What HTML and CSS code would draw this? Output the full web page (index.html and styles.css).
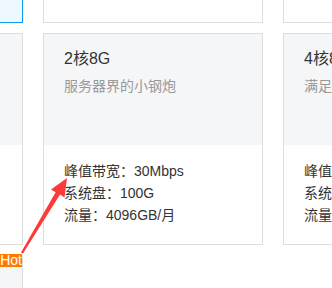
FILE: index.html
```html
<!DOCTYPE html>
<html lang="zh-CN">

<head>
    <meta charset="UTF-8">
    <meta name="viewport" content="width=device-width, initial-scale=1.0">
    <title>服务器套餐</title>
    <link rel="stylesheet" href="styles.css">
</head>

<body>
    <div class="plans">
        <!-- row 1 -->
        <div class="card active">
            <div class="card-head">
                <h3 class="title">1核1G</h3>
                <p class="desc">入门建站首选</p>
            </div>
            <ul class="specs">
                <li>峰值带宽：10Mbps</li>
                <li>系统盘：40G</li>
                <li>流量：1024GB/月</li>
            </ul>
        </div>
        <div class="card plain">
            <div class="card-head">
                <h3 class="title">2核4G</h3>
                <p class="desc">个人开发者之选</p>
            </div>
            <ul class="specs">
                <li>峰值带宽：20Mbps</li>
                <li>系统盘：80G</li>
                <li>流量：2048GB/月</li>
            </ul>
        </div>
        <div class="card plain">
            <div class="card-head">
                <h3 class="title">4核4G</h3>
                <p class="desc">中小企业推荐</p>
            </div>
            <ul class="specs">
                <li>峰值带宽：30Mbps</li>
                <li>系统盘：80G</li>
                <li>流量：3072GB/月</li>
            </ul>
        </div>

        <!-- row 2 -->
        <div class="card">
            <div class="card-head">
                <h3 class="title">2核2G</h3>
                <p class="desc">轻量应用好帮手</p>
            </div>
            <ul class="specs">
                <li>峰值带宽：20Mbps</li>
                <li>系统盘：60G</li>
                <li>流量：2048GB/月</li>
            </ul>
        </div>
        <div class="card">
            <div class="card-head">
                <h3 class="title">2核8G</h3>
                <p class="desc">服务器界的小钢炮</p>
            </div>
            <ul class="specs">
                <li>峰值带宽：30Mbps</li>
                <li>系统盘：100G</li>
                <li>流量：4096GB/月</li>
            </ul>
        </div>
        <div class="card">
            <div class="card-head">
                <h3 class="title">4核8G</h3>
                <p class="desc">满足企业级业务需求</p>
            </div>
            <ul class="specs">
                <li>峰值带宽：50Mbps</li>
                <li>系统盘：120G</li>
                <li>流量：6144GB/月</li>
            </ul>
        </div>

        <!-- row 3 -->
        <div class="card">
            <span class="hot">Hot</span>
            <div class="card-head">
                <h3 class="title">8核16G</h3>
                <p class="desc">高性能计算</p>
            </div>
            <ul class="specs">
                <li>峰值带宽：100Mbps</li>
                <li>系统盘：200G</li>
                <li>流量：8192GB/月</li>
            </ul>
        </div>
    </div>

    <!-- annotation arrow -->
    <svg class="arrow" width="332" height="288" viewBox="0 0 332 288">
        <polygon fill="#fb3a3a"
            points="67,178 51,189.4 55.6,192.2 21,252.4 23,253.6 60,194.6 64.5,197.4" />
    </svg>
</body>

</html>
```

FILE: styles.css
```css
html,
body {
    margin: 0;
    padding: 0;
    height: 288px;
    overflow: hidden;
    background-color: #fff;
    font-family: "Liberation Sans", "Noto Sans CJK SC", sans-serif;
}

.plans {
    display: grid;
    grid-template-columns: repeat(3, 220px);
    grid-auto-rows: 212px;
    column-gap: 20px;
    row-gap: 10px;
    margin-left: -197px;
    margin-top: -189px;
}

.card {
    position: relative;
    box-sizing: border-box;
    border: 1px solid #ddd;
    background-color: #fff;
}

.card.active {
    border-color: #0a9ff0;
    background-color: #eef8ff;
}

.card.active .card-head {
    background-color: transparent;
}

.card.plain .card-head {
    background-color: #fff;
}

.card-head {
    height: 111px;
    box-sizing: border-box;
    padding: 13px 20px 0;
    background-color: #f5f6f8;
}

.title {
    margin: 0;
    font-size: 16px;
    line-height: 24px;
    font-weight: normal;
    color: #333;
}

.desc {
    margin: 4px 0 0;
    font-size: 14px;
    line-height: 22px;
    color: #999;
}

.specs {
    list-style: none;
    margin: 0;
    padding: 15px 20px;
}

.specs li {
    font-size: 14px;
    line-height: 22px;
    color: #333;
}

.hot {
    position: absolute;
    top: -2px;
    right: 0;
    padding: 0 0 0 1px;
    font-size: 14px;
    line-height: 13px;
    height: 13px;
    color: #fff;
    background-color: #ff7a00;
}

.arrow {
    position: absolute;
    left: 0;
    top: 0;
    pointer-events: none;
}
```
